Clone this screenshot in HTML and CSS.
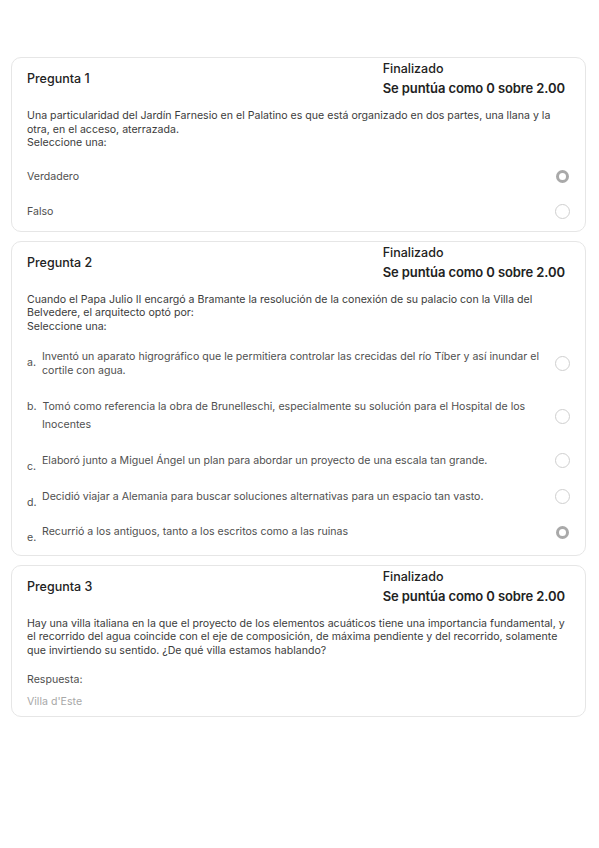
FILE: index.html
```html
<!DOCTYPE html>
<html lang="es">
<head>
<meta charset="utf-8">
<title>Revisión</title>
<link rel="stylesheet" href="styles.css">
</head>
<body>
<main class="page">
  <section class="card">
    <header class="card-head">
      <h2 class="q-title">Pregunta 1</h2>
      <div class="q-status">
        <div class="state">Finalizado</div>
        <div class="grade">Se puntúa como 0 sobre 2.00</div>
      </div>
    </header>
    <div class="q-text">Una particularidad del Jardín Farnesio en el Palatino es que está organizado en dos partes, una llana y la otra, en el acceso, aterrazada.<br>Seleccione una:</div>
    <div class="options">
      <div class="opt tf"><span class="opt-text">Verdadero</span><span class="radio checked"></span></div>
      <div class="opt tf"><span class="opt-text">Falso</span><span class="radio"></span></div>
    </div>
  </section>

  <section class="card">
    <header class="card-head">
      <h2 class="q-title">Pregunta 2</h2>
      <div class="q-status">
        <div class="state">Finalizado</div>
        <div class="grade">Se puntúa como 0 sobre 2.00</div>
      </div>
    </header>
    <div class="q-text">Cuando el Papa Julio II encargó a Bramante la resolución de la conexión de su palacio con la Villa del Belvedere, el arquitecto optó por:<br>Seleccione una:</div>
    <div class="options mc">
      <div class="opt opt-a"><span class="lbl">a.</span><span class="opt-text">Inventó un aparato higrográfico que le permitiera controlar las crecidas del río Tíber y así inundar el cortile con agua.</span><span class="radio"></span></div>
      <div class="opt opt-b"><span class="opt-text">b.&nbsp; Tomó como referencia la obra de Brunelleschi, especialmente su solución para el Hospital de los<br><span class="indent">Inocentes</span></span><span class="radio"></span></div>
      <div class="opt opt-s"><span class="lbl">c.</span><span class="opt-text">Elaboró junto a Miguel Ángel un plan para abordar un proyecto de una escala tan grande.</span><span class="radio"></span></div>
      <div class="opt opt-s"><span class="lbl">d.</span><span class="opt-text">Decidió viajar a Alemania para buscar soluciones alternativas para un espacio tan vasto.</span><span class="radio"></span></div>
      <div class="opt opt-s"><span class="lbl">e.</span><span class="opt-text">Recurrió a los antiguos, tanto a los escritos como a las ruinas</span><span class="radio checked"></span></div>
    </div>
  </section>

  <section class="card">
    <header class="card-head">
      <h2 class="q-title">Pregunta 3</h2>
      <div class="q-status">
        <div class="state">Finalizado</div>
        <div class="grade">Se puntúa como 0 sobre 2.00</div>
      </div>
    </header>
    <div class="q-text">Hay una villa italiana en la que el proyecto de los elementos acuáticos tiene una importancia fundamental, y el recorrido del agua coincide con el eje de composición, de máxima pendiente y del recorrido, solamente que invirtiendo su sentido. ¿De qué villa estamos hablando?</div>
    <div class="answer">
      <div class="answer-label">Respuesta:</div>
      <div class="answer-value">Villa d'Este</div>
    </div>
  </section>
</main>
</body>
</html>
```

FILE: styles.css
```css
* { box-sizing: border-box; }
html, body { margin: 0; padding: 0; background: #fff; }
body {
  font-family: Inter, "Noto Sans", "Liberation Sans", sans-serif;
  color: #3c3c3c;
  width: 599px;
  height: 848px;
}
.page {
  display: flex;
  flex-direction: column;
  gap: 9px;
  padding: 57px 13px 0 11px;
}
.card {
  border: 1px solid #e6e6e6;
  border-radius: 10px;
  padding: 1px 16px 1px 15px;
  background: #fff;
}
.card-head {
  display: flex;
  justify-content: space-between;
  align-items: center;
  padding-right: 4px;
}
.q-title {
  margin: 0;
  font-size: 12.5px;
  font-weight: 500;
  color: #222;
}
.q-status { white-space: nowrap; }
.state {
  font-size: 12.5px;
  font-weight: 500;
  color: #222;
  line-height: 19px;
}
.grade {
  font-size: 13px;
  font-weight: 600;
  letter-spacing: -0.1px;
  color: #222;
  line-height: 20px;
}
.q-text {
  margin-top: 11px;
  font-size: 10.6px;
  line-height: 13.5px;
  color: #3c3c3c;
}
.options { margin-top: 9px; }
.options.mc { padding-bottom: 4px; }
.opt {
  display: flex;
  align-items: center;
  font-size: 10.6px;
  color: #505050;
}
.opt.tf { height: 35.5px; }
.opt-text { flex: 1; line-height: 13.5px; padding-right: 8px; }
.lbl {
  width: 15px;
  flex: none;
  align-self: flex-start;
  padding-top: 6px;
  margin-bottom: -6px;
  line-height: 13.5px;
}
.opt-a { padding: 8px 0 11px; }
.opt-b { padding: 10px 0 9px; }
.opt-b .opt-text { line-height: 18px; }
.indent { padding-left: 15px; }
.opt-s { height: 35.5px; padding: 11px 0 0; align-items: flex-start; }
.opt-s .radio { margin-top: -1px; }
.radio {
  flex: none;
  width: 15px;
  height: 15px;
  border-radius: 50%;
  border: 1px solid #cfcfcf;
  margin-right: -1px;
}
.radio.checked {
  width: 13px;
  height: 13px;
  border: 3.5px solid #a9a9a9;
  margin-right: 0;
}
.opt-s .radio.checked { margin-top: 1px; }
.answer { margin-top: 14px; padding-bottom: 4px; }
.answer-label { font-size: 10.6px; line-height: 18px; color: #505050; }
.answer-value { margin-top: 4px; font-size: 10.6px; line-height: 18px; color: #a8a8a8; }
```
